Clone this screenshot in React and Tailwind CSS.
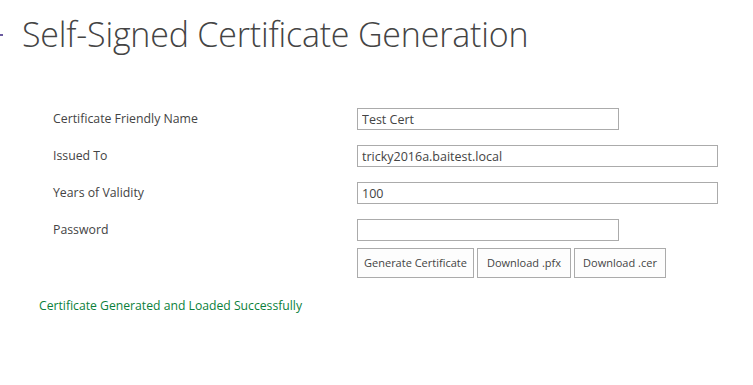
import React from "react";

const font = { fontFamily: '"Open Sans", "Noto Sans", sans-serif' };

const fields = [
  { label: "Certificate Friendly Name", value: "Test Cert", wide: false },
  { label: "Issued To", value: "tricky2016a.baitest.local", wide: true },
  { label: "Years of Validity", value: "100", wide: true },
  { label: "Password", value: "", wide: false, type: "password" },
];

const App = () => {
  return (
    <div className="w-[753px] h-[385px] bg-white overflow-hidden text-[#444]" style={font}>
      {/* page title */}
      <div className="flex items-center h-[70px] pb-[2px]">
        <div className="w-[3px] h-[2px] bg-[#6b5ba0] mt-[2px]" />
        <h1 className="ml-[19px] text-[34px] font-light tracking-[-0.2px] leading-none text-[#444]">
          Self-Signed Certificate Generation
        </h1>
      </div>

      {/* form */}
      <div className="pl-[53px] pt-[38px] flex flex-col gap-[15px]">
        {fields.map((f) => (
          <div key={f.label} className="flex items-center h-[22px]">
            <label className="w-[304px] text-[12.3px] leading-none">{f.label}</label>
            <input
              type={f.type || "text"}
              defaultValue={f.value}
              className={
                (f.wide ? "w-[361px]" : "w-[262px]") +
                " h-[22px] border border-[#ababab] px-[4px] text-[12.5px] text-[#444] outline-none bg-white"
              }
              style={font}
            />
          </div>
        ))}
      </div>
      <div className="pl-[357px] pt-[7px] flex gap-[3px]">
        <button className="w-[117px] h-[30px] border border-[#ababab] bg-[#fdfdfd] text-[11px] text-[#444]">
          Generate Certificate
        </button>
        <button className="w-[94px] h-[30px] border border-[#ababab] bg-[#fdfdfd] text-[11px] text-[#444]">
          Download .pfx
        </button>
        <button className="w-[92px] h-[30px] border border-[#ababab] bg-[#fdfdfd] text-[11px] text-[#444]">
          Download .cer
        </button>
      </div>

      <p className="pl-[39px] pt-[19px] text-[12.2px] text-[#0b7f3b]">
        Certificate Generated and Loaded Successfully
      </p>
    </div>
  );
};

export default App;
